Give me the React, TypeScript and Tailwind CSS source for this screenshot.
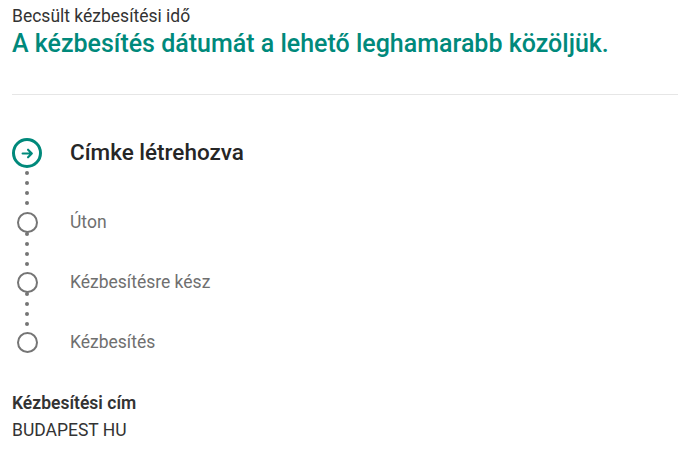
const steps = [
  { label: "Úton", first: true },
  { label: "Kézbesítésre kész", first: false },
  { label: "Kézbesítés", first: false },
];

function Dots({ first }: { first: boolean }) {
  return (
    <div
      className={
        first
          ? "w-[30px] h-[44px] flex flex-col items-center gap-[6px] pt-[3px]"
          : "w-[30px] h-[40px] flex flex-col items-center gap-[6px] pt-0"
      }
    >
      <span className="w-[4px] h-[4px] rounded-full bg-[#757575]" />
      <span className="w-[4px] h-[4px] rounded-full bg-[#757575]" />
      <span className="w-[4px] h-[4px] rounded-full bg-[#757575]" />
      <span className="w-[4px] h-[4px] rounded-full bg-[#757575]" />
    </div>
  );
}

export default function App() {
  return (
    <div
      className="w-[678px] h-[467px] bg-white pl-[12px] pt-[5px]"
      style={{ fontFamily: "Roboto, 'Liberation Sans', sans-serif" }}
    >
      <p className="text-[17.5px] leading-[22px] text-[#333333]">Becsült kézbesítési idő</p>
      <h1 className="mt-[2px] text-[25px] leading-[30px] font-medium text-[#00897b]">
        A kézbesítés dátumát a lehető leghamarabb közöljük.
      </h1>

      <div className="mt-[35px] h-px bg-[#e6e6e6]" />

      <div className="mt-[43px] flex flex-col">
        <div className="flex items-center h-[30px]">
          <div className="w-[30px] h-[30px] rounded-full border-[3px] border-[#00897b] flex items-center justify-center">
            <svg width="13" height="13" viewBox="0 0 12 12" fill="none">
              <path
                d="M1.5 6h8.5M6.5 2.5 10 6l-3.5 3.5"
                stroke="#00897b"
                strokeWidth="2"
                strokeLinecap="round"
                strokeLinejoin="round"
              />
            </svg>
          </div>
          <span className="ml-[28px] text-[22.5px] font-medium text-[#262626]">Címke létrehozva</span>
        </div>

        {steps.map((step) => (
          <div key={step.label} className="flex flex-col">
            <Dots first={step.first} />
            <div className="flex items-center h-[20px]">
              <div className="w-[30px] flex justify-center">
                <div className="w-[21px] h-[21px] rounded-full border-2 border-[#757575]" />
              </div>
              <span className="ml-[28px] text-[17.5px] text-[#6f6f6f]">{step.label}</span>
            </div>
          </div>
        ))}
      </div>

      <p className="mt-[40px] text-[17.5px] leading-[22px] font-semibold text-[#333333]">Kézbesítési cím</p>
      <p className="mt-[5px] text-[17.5px] leading-[22px] text-[#333333]">BUDAPEST HU</p>
    </div>
  );
}
